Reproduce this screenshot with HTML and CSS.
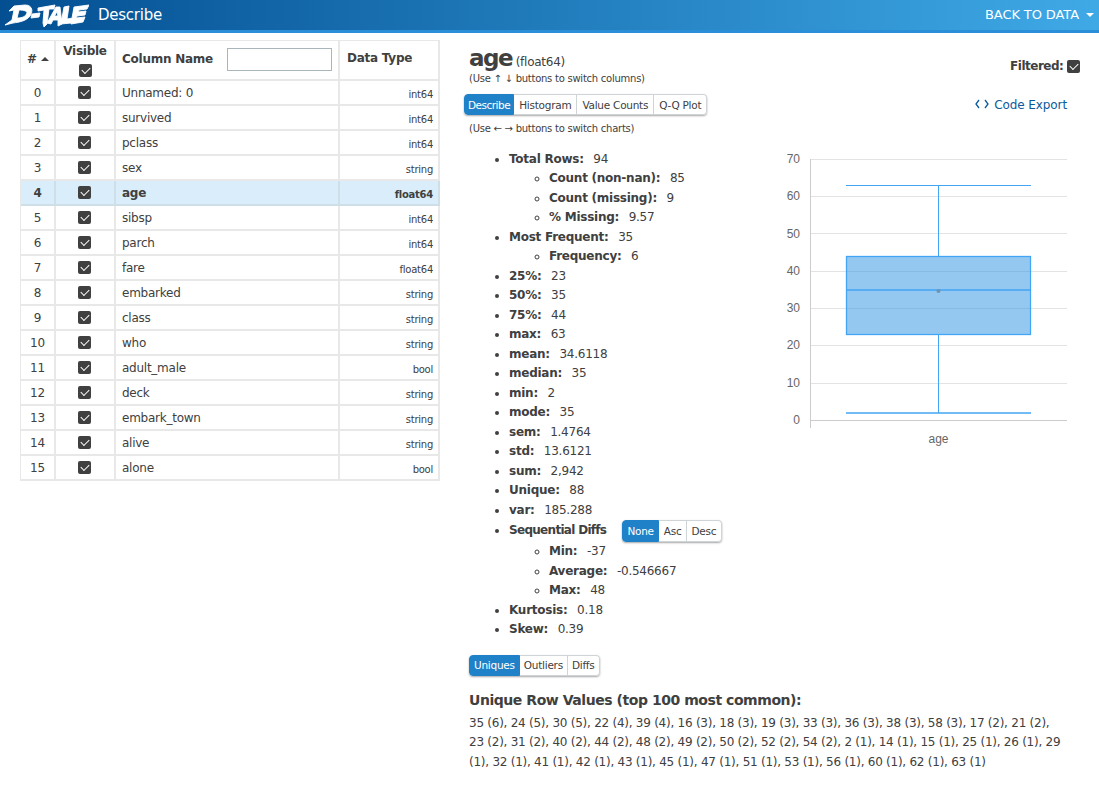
FILE: index.html
```html
<!DOCTYPE html>
<html lang="en">
<head>
  <meta charset="UTF-8" />
  <title>D-Tale Describe</title>
  <link rel="stylesheet" href="styles.css">
</head>
<body>

  <header class="navbar">
    <svg class="logo" viewBox="0 0 84 24" width="84" height="24">
      <g fill="#fff" stroke="#fff" stroke-width="0.9" stroke-linejoin="round">
        <path d="M0 22 L7 17 L9 7 L4 8 L9 3 L20 2 C28 2 28 9 25 13 C21 18 15 19 8 20 Z M14 7 L12 15 C18 15 21 13 22 10 C22 8 19 7 14 7 Z"/>
        <path d="M27 11 L35 10 L34 14 L26 15 Z"/>
        <path d="M33 5 L50 2 L49 6 L44 6 L42 21 L39 24 L38 20 L39 7 L33 8 Z"/>
        <path d="M42 20 L51 4 L55 4 L57 21 L53 23 L53 17 L48 17 L46 21 Z M49.500 13 L53 13 L52 8.500 Z"/>
        <path d="M59 4 L64 3 L62 16 L68 15 L66 20 L56 21 Z"/>
        <path d="M69 4 L84 2 L82 6 L74 7 L73 9 L81 8 L80 12 L72 13 L71 15 L80 14 L78 19 L66 21 Z"/>
      </g>
    </svg>
    <span class="navbar-title">Describe</span>
    <span class="navbar-back">BACK TO DATA <i class="caret"></i></span>
  </header>

  <main class="content">

    <table class="grid">
      <thead>
        <tr>
          <th class="col-num"># <i class="sort-up"></i></th>
          <th class="col-vis">Visible<span class="check"></span></th>
          <th class="col-name"><div class="name-head">Column Name <input type="text"></div></th>
          <th class="col-type">Data Type</th>
        </tr>
      </thead>
      <tbody>
        <tr><td class="num">0</td><td class="vis"><span class="check"></span></td><td>Unnamed: 0</td><td class="type">int64</td></tr>
        <tr><td class="num">1</td><td class="vis"><span class="check"></span></td><td>survived</td><td class="type">int64</td></tr>
        <tr><td class="num">2</td><td class="vis"><span class="check"></span></td><td>pclass</td><td class="type">int64</td></tr>
        <tr><td class="num">3</td><td class="vis"><span class="check"></span></td><td>sex</td><td class="type">string</td></tr>
        <tr class="selected"><td class="num">4</td><td class="vis"><span class="check"></span></td><td>age</td><td class="type">float64</td></tr>
        <tr><td class="num">5</td><td class="vis"><span class="check"></span></td><td>sibsp</td><td class="type">int64</td></tr>
        <tr><td class="num">6</td><td class="vis"><span class="check"></span></td><td>parch</td><td class="type">int64</td></tr>
        <tr><td class="num">7</td><td class="vis"><span class="check"></span></td><td>fare</td><td class="type">float64</td></tr>
        <tr><td class="num">8</td><td class="vis"><span class="check"></span></td><td>embarked</td><td class="type">string</td></tr>
        <tr><td class="num">9</td><td class="vis"><span class="check"></span></td><td>class</td><td class="type">string</td></tr>
        <tr><td class="num">10</td><td class="vis"><span class="check"></span></td><td>who</td><td class="type">string</td></tr>
        <tr><td class="num">11</td><td class="vis"><span class="check"></span></td><td>adult_male</td><td class="type">bool</td></tr>
        <tr><td class="num">12</td><td class="vis"><span class="check"></span></td><td>deck</td><td class="type">string</td></tr>
        <tr><td class="num">13</td><td class="vis"><span class="check"></span></td><td>embark_town</td><td class="type">string</td></tr>
        <tr><td class="num">14</td><td class="vis"><span class="check"></span></td><td>alive</td><td class="type">string</td></tr>
        <tr><td class="num">15</td><td class="vis"><span class="check"></span></td><td>alone</td><td class="type">bool</td></tr>
      </tbody>
    </table>

    <section class="details">
      <div class="title-row">
        <div>
          <h1><b>age</b> <small>(float64)</small></h1>
          <div class="hint hint-cols">(Use ↑ ↓ buttons to switch columns)</div>
        </div>
        <div class="filtered">Filtered: <span class="check"></span></div>
      </div>

      <div class="tabs-row">
        <div class="btn-group">
          <button class="active">Describe</button><button>Histogram</button><button>Value Counts</button><button>Q-Q Plot</button>
        </div>
        <a class="code-export">
          <svg class="code-icon" width="14" height="10" viewBox="0 0 14 10" fill="none" stroke="#0c5a9c" stroke-width="1.3"><path d="M4 1 L1 5 L4 9"/><path d="M10 1 L13 5 L10 9"/></svg>
          Code Export
        </a>
      </div>
      <div class="hint hint-charts">(Use ← → buttons to switch charts)</div>

      <div class="stats-row">
        <ul class="stats">
          <li><b>Total Rows:</b> 94
            <ul>
              <li><b>Count (non-nan):</b> 85</li>
              <li><b>Count (missing):</b> 9</li>
              <li><b>% Missing:</b> 9.57</li>
            </ul>
          </li>
          <li><b>Most Frequent:</b> 35
            <ul>
              <li><b>Frequency:</b> 6</li>
            </ul>
          </li>
          <li><b>25%:</b> 23</li>
          <li><b>50%:</b> 35</li>
          <li><b>75%:</b> 44</li>
          <li><b>max:</b> 63</li>
          <li><b>mean:</b> 34.6118</li>
          <li><b>median:</b> 35</li>
          <li><b>min:</b> 2</li>
          <li><b>mode:</b> 35</li>
          <li><b>sem:</b> 1.4764</li>
          <li><b>std:</b> 13.6121</li>
          <li><b>sum:</b> 2,942</li>
          <li><b>Unique:</b> 88</li>
          <li><b>var:</b> 185.288</li>
          <li class="seq-row"><b>Sequential Diffs</b>
            <div class="btn-group small">
              <button class="active">None</button><button>Asc</button><button>Desc</button>
            </div>
            <ul>
              <li><b>Min:</b> -37</li>
              <li><b>Average:</b> -0.546667</li>
              <li><b>Max:</b> 48</li>
            </ul>
          </li>
          <li><b>Kurtosis:</b> 0.18</li>
          <li><b>Skew:</b> 0.39</li>
        </ul>

        <svg class="chart" width="310" height="300" viewBox="0 0 310 300">
          <path stroke="#e3e3e3" d="M54 11.500H310M54 48.500H310M54 85.500H310M54 123.500H310M54 160.500H310M54 197.500H310M54 235.500H310"/>
          <path d="M53.500 11V280" stroke="#ccc"/>
          <path d="M54 272.500H310" stroke="#ccc"/>
          <g class="ticks" text-anchor="end">
            <text x="43" y="15">70</text>
            <text x="43" y="52">60</text>
            <text x="43" y="90">50</text>
            <text x="43" y="127">40</text>
            <text x="43" y="164">30</text>
            <text x="43" y="201">20</text>
            <text x="43" y="239">10</text>
            <text x="43" y="276">0</text>
          </g>
          <text class="ticks" x="181.500" y="295" text-anchor="middle">age</text>
          <g stroke="#42a5f5" fill="none">
            <path d="M89 37.500H274"/>
            <path d="M181.500 37V108M181.500 187V265"/>
            <rect x="89.500" y="108.500" width="184" height="78" fill="#3d9be3" fill-opacity="0.55" stroke-width="1.300"/>
            <path d="M89 142H274" stroke-width="1.600"/>
            <path d="M89 265H274" stroke-width="1.600"/>
          </g>
          <circle cx="181.500" cy="143" r="2" fill="#6f93b3"/>
        </svg>
      </div>

      <div class="btn-group uniques-tabs">
        <button class="active">Uniques</button><button>Outliers</button><button>Diffs</button>
      </div>

      <h2>Unique Row Values (top 100 most common):</h2>
      <p class="uniques">35 (6), 24 (5), 30 (5), 22 (4), 39 (4), 16 (3), 18 (3), 19 (3), 33 (3), 36 (3), 38 (3), 58 (3), 17 (2), 21 (2), 23 (2), 31 (2), 40 (2), 44 (2), 48 (2), 49 (2), 50 (2), 52 (2), 54 (2), 2 (1), 14 (1), 15 (1), 25 (1), 26 (1), 29 (1), 32 (1), 41 (1), 42 (1), 43 (1), 45 (1), 47 (1), 51 (1), 53 (1), 56 (1), 60 (1), 62 (1), 63 (1)</p>
    </section>

  </main>

</body>
</html>
```

FILE: styles.css
```css
* {
  box-sizing: border-box;
}
body {
  margin: 0;
  font-family: "DejaVu Sans", sans-serif;
  font-size: 12px;
  letter-spacing: -0.25px;
  color: #404040;
  background: #fff;
}

/* top bar */
.navbar {
  height: 33px;
  display: flex;
  align-items: center;
  padding: 0 4px 1px 5px;
  color: #fff;
  background: linear-gradient(to right, #034f92, #3fa9e6);
  border-bottom: 3px solid #2a8fd8;
}
.logo {
  margin-right: 9px;
}
.navbar-title {
  font-size: 15px;
}
.navbar-back {
  margin-left: auto;
  margin-right: 1px;
  font-size: 13px;
  letter-spacing: -0.1px;
}
.caret {
  display: inline-block;
  margin-left: 3px;
  vertical-align: 2px;
  border-top: 4px solid #fff;
  border-left: 4px solid transparent;
  border-right: 4px solid transparent;
}

.content {
  display: flex;
  align-items: flex-start;
  padding: 7px 32px 0 20px;
}

/* column grid */
.grid {
  width: 419px;
  flex: none;
  table-layout: fixed;
  border-collapse: separate;
  border-spacing: 0;
  border-top: 1px solid #e8e8e8;
  border-left: 1px solid #e8e8e8;
}
.grid th, .grid td {
  border-right: 2px solid #e8e8e8;
  border-bottom: 2px solid #e8e8e8;
  padding: 0 6px;
}
.grid td {
  height: 25px;
}
.grid th {
  height: 40px;
  padding-bottom: 3px;
  text-align: left;
  font-weight: 700;
}
.col-num { width: 35px; }
.col-vis { width: 60px; }
.col-name { width: 224px; }
.col-type { width: 100px; }
.grid .col-vis, .num, .vis {
  text-align: center;
}
.grid .col-vis {
  padding: 0;
}
.grid .vis {
  padding: 0 1px 1px 0;
}
.col-vis .check {
  display: block;
  margin: 6px auto 0;
}
.grid .col-num {
  padding: 0 0 3px 6px;
}
.grid .col-type {
  padding-left: 7px;
  padding-bottom: 4px;
}
.name-head {
  display: flex;
  align-items: center;
  justify-content: space-between;
}
.name-head input {
  width: 105px;
  height: 23px;
  margin: 2px 0 0 0;
  border: 1px solid #a9b7bd;
  background: #fff;
}
.sort-up {
  display: inline-block;
  vertical-align: 2px;
  border-bottom: 4px solid #404040;
  border-left: 4px solid transparent;
  border-right: 4px solid transparent;
}
.grid .type {
  text-align: right;
  font-size: 10px;
  vertical-align: bottom;
  padding: 0 5px 4px 0;
}
.selected td {
  background: #d9eefa;
  font-weight: 700;
  border-color: #cfdfe8;
}

.check {
  display: inline-block;
  width: 13px;
  height: 13px;
  border-radius: 2px;
  background: #404040;
  position: relative;
  vertical-align: middle;
}
.check::after {
  content: "";
  position: absolute;
  left: 3px;
  top: 3px;
  width: 7px;
  height: 4px;
  border-left: 1.5px solid #fff;
  border-bottom: 1.5px solid #fff;
  transform: rotate(-45deg);
}

/* right side */
.details {
  flex: 1;
  margin-left: 24px;
  min-width: 0;
}
.title-row {
  display: flex;
  justify-content: space-between;
  padding: 6px 0 0 5px;
}
h1 {
  margin: 0;
  font-size: 12px;
  font-weight: 400;
  line-height: 24px;
}
h1 b {
  font-size: 23px;
  letter-spacing: -1.5px;
}
h1 small {
  font-size: 12px;
}
.hint {
  font-size: 10px;
  line-height: 12px;
}
.hint-cols {
  margin-top: -1px;
}
.filtered {
  font-weight: 700;
  padding-top: 13px;
  margin-right: -13px;
  letter-spacing: -0.5px;
}
.tabs-row {
  display: flex;
  justify-content: space-between;
  align-items: center;
  margin-top: 9px;
}
.code-export {
  color: #0c5a9c;
  font-size: 12px;
  letter-spacing: -0.1px;
}
.code-icon {
  margin-right: 2px;
}
.hint-charts {
  margin: 8px 0 0 5px;
}
.btn-group {
  display: inline-flex;
  border-radius: 4px;
  box-shadow: 0 1px 2px rgba(0, 0, 0, 0.35);
}
.btn-group button {
  height: 21px;
  padding: 0 4px;
  font-family: inherit;
  font-size: 10.5px;
  letter-spacing: -0.25px;
  color: #404040;
  background: #fff;
  border: 1px solid #cfd4d6;
  border-left-width: 0;
}
.btn-group button:first-child {
  border-radius: 4px 0 0 4px;
  border-left-width: 1px;
}
.btn-group button:last-child {
  border-radius: 0 4px 4px 0;
}
.btn-group button.active {
  color: #fff;
  background: #1f81c8;
  border-color: #1f81c8;
}
.tabs-row .btn-group button {
  padding: 0 5px;
}
.tabs-row .btn-group button.active {
  padding: 0 3px;
  letter-spacing: -0.5px;
}
.btn-group.small button {
  height: 22px;
  padding: 0 4.5px;
}

.stats-row {
  display: flex;
  justify-content: space-between;
  margin-top: 14.75px;
}
.stats {
  margin: 0;
  padding: 0 0 0 45px;
  line-height: 19.5px;
}
.stats ul {
  padding-left: 40px;
  list-style: circle;
}
.stats b {
  margin-right: 6px;
}
.seq-row > b {
  letter-spacing: -0.7px;
}
.seq-row .btn-group {
  margin-left: 6px;
  vertical-align: -1.5px;
}
.chart {
  flex: none;
  margin-top: -1.75px;
}
.ticks text, text.ticks {
  font-family: "Liberation Sans", sans-serif;
  font-size: 12px;
  letter-spacing: 0;
  fill: #666;
}

.uniques-tabs {
  margin: 15px 0 0 5px;
}
h2 {
  margin: 15px 0 0 5px;
  font-size: 14px;
  line-height: 18px;
  letter-spacing: -0.45px;
}
.uniques {
  margin: 5px 0 0 5px;
  line-height: 19.5px;
}
```
